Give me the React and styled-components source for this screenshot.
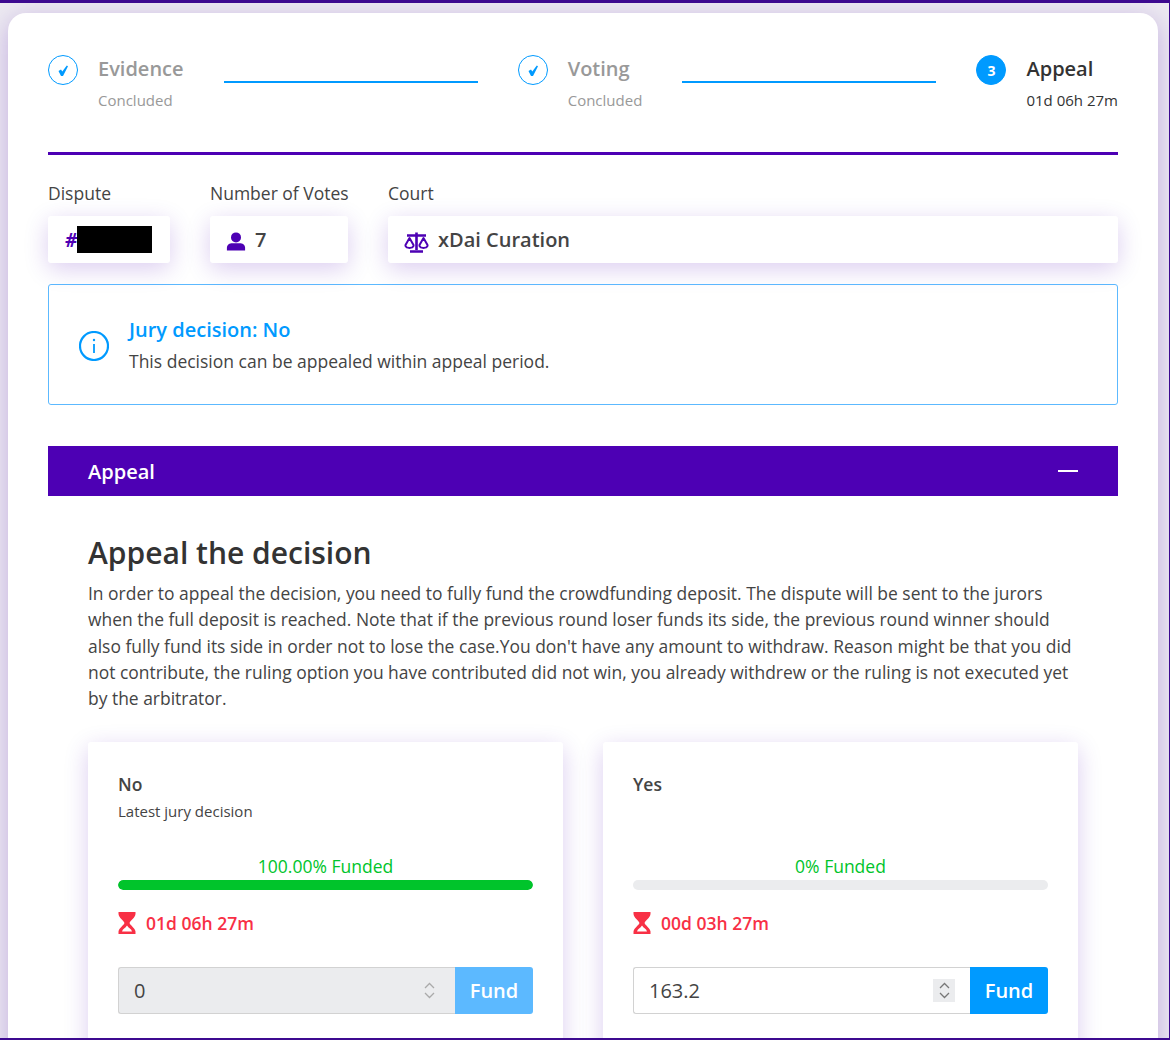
import React from 'react';
import styled, { createGlobalStyle } from 'styled-components';

const PURPLE = '#4d00b4';
const BLUE = '#009aff';
const GREEN = '#00c42b';
const RED = '#f83045';
const SHADOW = '0 6px 24px rgba(77, 0, 180, 0.2)';

const Global = createGlobalStyle`
  html, body {
    margin: 0;
    padding: 0;
    background: #ece9f1;
    font-family: "Open Sans", "Liberation Sans", sans-serif;
    color: #333;
  }
`;

const Frame = styled.div`
  box-sizing: border-box;
  width: 1170px;
  height: 1040px;
  overflow: hidden;
  padding: 10px 11px 0 8px;
  background: #ece9f1;
  border-top: 3px solid #3d0a90;
  border-bottom: 2px solid #3d0a90;
  border-right: 1px solid #3d0a90;
`;

const Sheet = styled.main`
  box-sizing: border-box;
  height: 1100px;
  padding: 42px 40px 0;
  background: #fff;
  border-radius: 18px 18px 0 0;
  box-shadow: 0 6px 24px rgba(77, 0, 180, 0.25);
`;

/* stepper */

const Stepper = styled.div`
  display: flex;
  align-items: flex-start;
  height: 100px;
  margin-bottom: -3px;
  border-bottom: 3px solid ${PURPLE};
  box-sizing: border-box;
`;

const Step = styled.div`
  display: flex;
  gap: 20px;
`;

const StepDot = styled.div`
  box-sizing: border-box;
  width: 30px;
  height: 30px;
  border-radius: 50%;
  display: flex;
  align-items: center;
  justify-content: center;
  border: 1.5px solid ${BLUE};
  background: ${(p) => (p.$active ? BLUE : '#fff')};
  color: #fff;
  font-size: 14px;
  font-weight: 700;
`;

const StepText = styled.div`
  display: flex;
  flex-direction: column;
`;

const StepTitle = styled.div`
  font-size: 20px;
  line-height: 28px;
  font-weight: 600;
  color: ${(p) => (p.$active ? '#333' : '#999')};
`;

const StepSub = styled.div`
  margin-top: 7px;
  font-size: 15px;
  line-height: 20px;
  color: ${(p) => (p.$active ? '#333' : '#999')};
`;

const Connector = styled.div`
  flex: 1;
  height: 2px;
  margin: 26px 40px 0;
  background: ${BLUE};
`;

/* facts row */

const Facts = styled.div`
  display: flex;
  gap: 40px;
  margin-top: 29px;
`;

const Fact = styled.div`
  flex: ${(p) => (p.$grow ? 1 : 'none')};
  width: ${(p) => p.$width || 'auto'};
`;

const FactLabel = styled.div`
  font-size: 17.5px;
  line-height: 24px;
  white-space: nowrap;
  color: #444;
`;

const FactBox = styled.div`
  box-sizing: border-box;
  height: 47px;
  margin-top: 11px;
  padding: 0 16px;
  display: flex;
  align-items: center;
  gap: 9px;
  background: #fff;
  border-radius: 3px;
  box-shadow: ${SHADOW};
  font-size: 20px;
  font-weight: 600;
  color: #444;
`;

const Hash = styled.span`
  margin-left: 1px;
  color: ${PURPLE};
  font-size: 19px;
  font-weight: 700;
  font-style: italic;
`;

const Redacted = styled.span`
  display: block;
  width: 75px;
  height: 27px;
  margin-left: -9px;
  background: #000;
`;

/* alert */

const Alert = styled.div`
  box-sizing: border-box;
  height: 121px;
  margin-top: 21px;
  padding: 0 30px;
  display: flex;
  align-items: center;
  gap: 20px;
  background: #fff;
  border: 1px solid #5cb9ff;
  border-radius: 3px;
`;

const AlertTitle = styled.div`
  font-size: 20px;
  line-height: 28px;
  font-weight: 600;
  color: ${BLUE};
`;

const AlertText = styled.div`
  margin-top: 5px;
  font-size: 17.5px;
  line-height: 24px;
  color: #444;
`;

/* appeal panel */

const PanelBar = styled.div`
  height: 50px;
  margin-top: 41px;
  padding: 0 40px;
  display: flex;
  align-items: center;
  justify-content: space-between;
  background: ${PURPLE};
  color: #fff;
  font-size: 20px;
  font-weight: 600;
`;

const Dash = styled.span`
  display: block;
  width: 20px;
  height: 2px;
  background: #fff;
`;

const PanelBody = styled.section`
  padding: 35px 40px 0;
`;

const Heading = styled.h2`
  margin: 0;
  font-size: 30px;
  line-height: 44px;
  font-weight: 600;
  color: #333;
`;

const Para = styled.p`
  margin: 5px 0 0;
  font-size: 17.45px;
  line-height: 26.3px;
  color: #444;
`;

const Cards = styled.div`
  display: grid;
  grid-template-columns: 1fr 1fr;
  gap: 40px;
  margin-top: 31px;
`;

const Card = styled.div`
  box-sizing: border-box;
  height: 330px;
  padding: 30px;
  background: #fff;
  border-radius: 3px;
  box-shadow: ${SHADOW};
`;

const Option = styled.div`
  font-size: 17.5px;
  line-height: 24px;
  font-weight: 600;
  color: #444;
`;

const OptionNote = styled.div`
  height: 20px;
  margin-top: 5px;
  font-size: 15px;
  line-height: 20px;
  color: #444;
`;

const FundedLabel = styled.div`
  margin-top: 33px;
  text-align: center;
  font-size: 17.5px;
  line-height: 24px;
  color: ${GREEN};
`;

const Track = styled.div`
  height: 10px;
  margin-top: 2px;
  border-radius: 5px;
  background: #ebecee;
  overflow: hidden;
`;

const Fill = styled.div`
  height: 100%;
  border-radius: 5px;
  background: ${GREEN};
`;

const Countdown = styled.div`
  display: flex;
  align-items: center;
  gap: 10px;
  margin-top: 21px;
  color: ${RED};
  font-size: 17.5px;
  line-height: 24px;
  font-weight: 600;
`;

const FundRow = styled.div`
  display: flex;
  height: 47px;
  margin-top: 32px;
`;

const AmountField = styled.div`
  box-sizing: border-box;
  flex: 1;
  padding: 0 15px 0 15px;
  display: flex;
  align-items: center;
  justify-content: space-between;
  border: 1px solid #d2d2d2;
  border-right: none;
  border-radius: 3px 0 0 3px;
  background: ${(p) => (p.$disabled ? '#ebecee' : '#fff')};
  font-size: 20px;
  color: #444;
`;

const Spinner = styled.span`
  display: flex;
  align-items: center;
  justify-content: center;
  width: 22px;
  height: 23px;
  background: ${(p) => (p.$disabled ? 'transparent' : '#ebecee')};
`;

const FundButton = styled.button`
  box-sizing: border-box;
  width: 78px;
  border: none;
  padding: 0;
  border-radius: 0 3px 3px 0;
  background: ${(p) => (p.$disabled ? '#5cb9ff' : BLUE)};
  color: #fff;
  font-family: inherit;
  font-size: 20px;
  font-weight: 600;
`;

/* drawings */

const CheckIcon = () => (
  <svg width="14" height="15" viewBox="0 0 14 15">
    <path d="M2.5 8 L5 6.4 L6.3 8.6 L10.8 2.5 L12 3.2 L7 13 H5 Z" fill={BLUE} />
  </svg>
);

const PersonIcon = () => (
  <svg width="20" height="21" viewBox="0 0 22 22" style={{ marginTop: 4 }}>
    <circle cx="11" cy="6.5" r="5.5" fill={PURPLE} />
    <path d="M1 21 V18 C1 14.5 4 13 7 13 H15 C18 13 21 14.5 21 18 V21 Z" fill={PURPLE} />
  </svg>
);

const ScalesIcon = () => (
  <svg width="25" height="21" viewBox="0 0 25 21" style={{ marginTop: 6 }} fill="none" stroke={PURPLE}>
    <path d="M3 3.5 H22 M12.5 0.5 V18 M6 19.5 H19" strokeWidth="2.6" />
    <path d="M1.5 13 L5.5 6 L9.5 13 V14 C8.5 16.5 2.5 16.5 1.5 14 Z M15.5 13 L19.5 6 L23.5 13 V14 C22.5 16.5 16.5 16.5 15.5 14 Z" strokeWidth="2" strokeLinejoin="round" />
  </svg>
);

const InfoIcon = () => (
  <svg width="30" height="30" viewBox="0 0 30 30" fill="none" style={{ marginTop: 2 }}>
    <circle cx="15" cy="15" r="14" stroke={BLUE} strokeWidth="2.2" />
    <path d="M15 13 V22" stroke={BLUE} strokeWidth="1.8" />
    <circle cx="15" cy="9" r="1.2" fill={BLUE} />
  </svg>
);

const HourglassIcon = () => (
  <svg width="18" height="24" viewBox="0 0 18 24">
    <path d="M0.5 1 H17.5 V3 C17 7 12.5 9.5 11.5 12 C12.5 14.5 17 17 17.5 20.5 V23 H0.5 V20.5 C1 17 5.5 14.5 6.5 12 C5.5 9.5 1 7 0.5 3 Z" fill={RED} />
    <path d="M9 14.5 C10.5 17 13.5 18 14 20.5 H4 C4.5 18 7.5 17 9 14.5 Z" fill="#fff" />
  </svg>
);

const ArrowsIcon = ({ disabled }) => (
  <svg width="11" height="17" viewBox="0 0 11 17" fill="none" stroke={disabled ? '#aaa' : '#777'} strokeWidth="1.3">
    <path d="M1 6 L5.5 1.5 L10 6 M1 11 L5.5 15.5 L10 11" />
  </svg>
);

const FundCard = ({ option, note, funded, percent, time, amount, disabled }) => (
  <Card>
    <Option>{option}</Option>
    <OptionNote>{note}</OptionNote>
    <FundedLabel>{funded}</FundedLabel>
    <Track>
      <Fill style={{ width: `${percent}%` }} />
    </Track>
    <Countdown>
      <HourglassIcon />
      {time}
    </Countdown>
    <FundRow>
      <AmountField $disabled={disabled}>
        {amount}
        <Spinner $disabled={disabled}>
          <ArrowsIcon disabled={disabled} />
        </Spinner>
      </AmountField>
      <FundButton $disabled={disabled}>Fund</FundButton>
    </FundRow>
  </Card>
);

export default function App() {
  return (
    <Frame>
      <Global />
      <Sheet>
        <Stepper>
          <Step>
            <StepDot><CheckIcon /></StepDot>
            <StepText>
              <StepTitle>Evidence</StepTitle>
              <StepSub>Concluded</StepSub>
            </StepText>
          </Step>
          <Connector />
          <Step>
            <StepDot><CheckIcon /></StepDot>
            <StepText>
              <StepTitle>Voting</StepTitle>
              <StepSub>Concluded</StepSub>
            </StepText>
          </Step>
          <Connector />
          <Step>
            <StepDot $active>3</StepDot>
            <StepText>
              <StepTitle $active>Appeal</StepTitle>
              <StepSub $active>01d 06h 27m</StepSub>
            </StepText>
          </Step>
        </Stepper>

        <Facts>
          <Fact $width="122px">
            <FactLabel>Dispute</FactLabel>
            <FactBox>
              <Hash>#</Hash>
              <Redacted />
            </FactBox>
          </Fact>
          <Fact $width="138px">
            <FactLabel>Number of Votes</FactLabel>
            <FactBox>
              <PersonIcon />7
            </FactBox>
          </Fact>
          <Fact $grow>
            <FactLabel>Court</FactLabel>
            <FactBox>
              <ScalesIcon />xDai Curation
            </FactBox>
          </Fact>
        </Facts>

        <Alert>
          <InfoIcon />
          <div>
            <AlertTitle>Jury decision: No</AlertTitle>
            <AlertText>This decision can be appealed within appeal period.</AlertText>
          </div>
        </Alert>

        <PanelBar>
          Appeal
          <Dash />
        </PanelBar>
        <PanelBody>
          <Heading>Appeal the decision</Heading>
          <Para>
            In order to appeal the decision, you need to fully fund the crowdfunding deposit. The dispute will be sent to the jurors when the full deposit is reached. Note that if the previous round loser funds its side, the previous round winner should also fully fund its side in order not to lose the case.You don't have any amount to withdraw. Reason might be that you did not contribute, the ruling option you have contributed did not win, you already withdrew or the ruling is not executed yet by the arbitrator.
          </Para>
          <Cards>
            <FundCard
              option="No"
              note="Latest jury decision"
              funded="100.00% Funded"
              percent={100}
              time="01d 06h 27m"
              amount="0"
              disabled
            />
            <FundCard
              option="Yes"
              funded="0% Funded"
              percent={0}
              time="00d 03h 27m"
              amount="163.2"
            />
          </Cards>
        </PanelBody>
      </Sheet>
    </Frame>
  );
}
